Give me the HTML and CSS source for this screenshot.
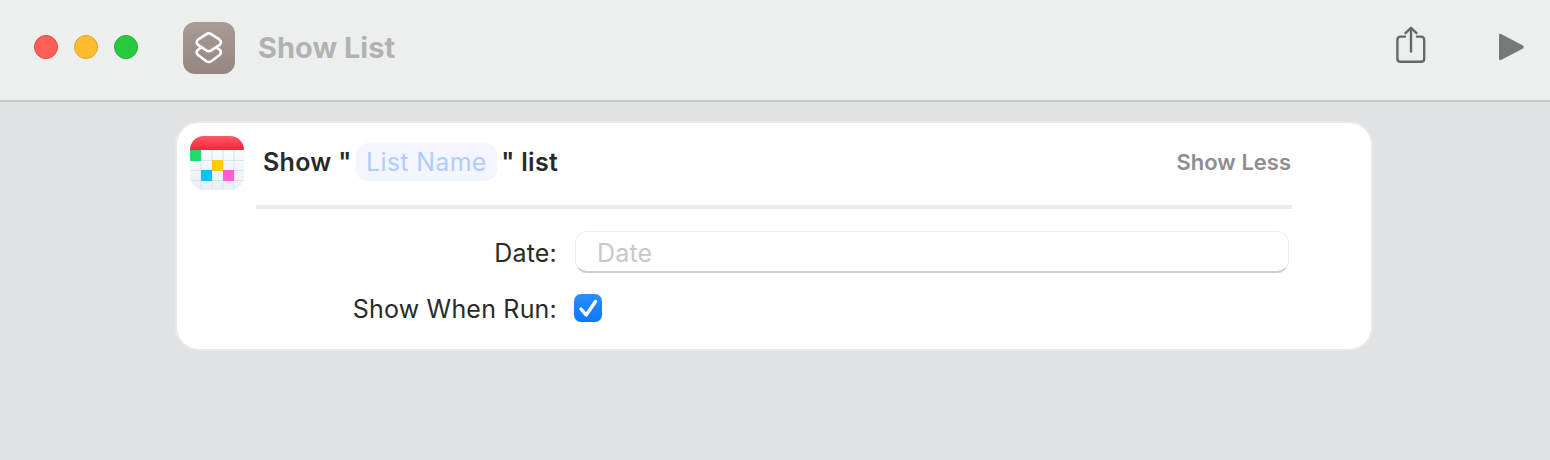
FILE: index.html
```html
<!DOCTYPE html>
<html lang="en">
<head>
    <meta charset="UTF-8">
    <meta name="viewport" content="width=device-width, initial-scale=1.0">
    <title>Show List</title>
    <link rel="stylesheet" href="styles.css">
</head>
<body>
    <header class="titlebar">
        <div class="traffic">
            <span class="light red"></span>
            <span class="light yellow"></span>
            <span class="light green"></span>
        </div>
        <div class="app-icon">
            <svg width="52" height="52" viewBox="0 0 52 52" fill="none" stroke="#fff" stroke-width="2.6" stroke-linejoin="round" stroke-linecap="round">
                <path d="M18.5 25.3 L15 27.8 Q12.2 30.4 15 33 L23 39 Q25.8 41 28.6 39 L36.600 33 Q39.400 30.400 36.600 27.800 L33 25.300"/>
                <path d="M23 12.4 Q25.8 10.4 28.6 12.4 L36.600 17.600 Q39.400 20.200 36.600 22.800 L28.600 28.200 Q25.800 30.200 23 28.200 L15 22.800 Q12.200 20.200 15 17.600 Z"/>
            </svg>
        </div>
        <h1 class="app-title">Show List</h1>
        <div class="actions">
            <svg class="share" width="30" height="38" viewBox="0 0 30 38" fill="none" stroke="#666867" stroke-width="2.4" stroke-linecap="round" stroke-linejoin="round">
                <path d="M9 10.6 H4.8 Q1.400 10.600 1.400 14 V32.400 Q1.400 35.800 4.800 35.800 H24.800 Q28.200 35.800 28.200 32.400 V14 Q28.200 10.600 24.800 10.600 H21"/>
                <path d="M15 25.500 V2.200"/>
                <path d="M9.500 7.200 L15 1.800 L20.500 7.200"/>
            </svg>
            <svg class="play" width="26" height="28" viewBox="0 0 26 28">
                <path d="M1 2.200 Q1 .2 3 1 L25 12.600 Q26.400 14 25 15.400 L3 27 Q1 27.800 1 25.800 Z" fill="#77787a"/>
            </svg>
        </div>
    </header>

    <main class="card">
        <div class="card-head">
            <svg class="cal-icon" width="54" height="54" viewBox="0 0 54 54">
                <defs>
                    <clipPath id="calClip"><rect width="54" height="54" rx="14"/></clipPath>
                    <linearGradient id="calRed" x1="0" y1="0" x2="0" y2="1">
                        <stop offset="0" stop-color="#ff5a66"/>
                        <stop offset="1" stop-color="#f8233a"/>
                    </linearGradient>
                    <linearGradient id="calBody" x1="0" y1="0" x2="0" y2="1">
                        <stop offset="0" stop-color="#ffffff"/>
                        <stop offset="1" stop-color="#e9eff6"/>
                    </linearGradient>
                </defs>
                <g clip-path="url(#calClip)">
                    <rect width="54" height="54" fill="url(#calBody)"/>
                    <g stroke="#d9e3ee" stroke-width="1">
                        <path d="M11 14V54M22 14V54M33 14V54M44 14V54M0 24.500H54M0 34.500H54M0 44.500H54"/>
                    </g>
                    <rect x="0" y="14" width="11" height="11" fill="#1fdc6a"/>
                    <rect x="22" y="24" width="11" height="11" fill="#ffcc0a"/>
                    <rect x="11" y="34" width="11" height="11" fill="#0cc0fa"/>
                    <rect x="33" y="34" width="11" height="11" fill="#ff5fd0"/>
                    <rect width="54" height="14" fill="url(#calRed)"/>
                </g>
            </svg>
            <div class="phrase">
                <span>Show "</span>
                <span class="pill">List Name</span>
                <span>" list</span>
            </div>
            <span class="show-less">Show Less</span>
        </div>
        <div class="divider"></div>
        <div class="form">
            <label class="form-label">Date:</label>
            <div class="date-input">Date</div>
            <label class="form-label">Show When Run:</label>
            <div class="checkbox">
                <svg width="28" height="28" viewBox="0 0 28 28" fill="none" stroke="#fff" stroke-width="3.4" stroke-linecap="round" stroke-linejoin="round">
                    <path d="M7 15 L12.200 21 L21.500 7.500"/>
                </svg>
            </div>
        </div>
    </main>
</body>
</html>
```

FILE: styles.css
```css
* {
    box-sizing: border-box;
}
body {
    margin: 0;
    height: 460px;
    overflow: hidden;
    font-family: Inter, "Liberation Sans", sans-serif;
    background-color: #e1e2e4;
    color: #2a2a2a;
}
.titlebar {
    display: flex;
    align-items: center;
    height: 102px;
    padding: 0 26px 6px 34px;
    background-color: #edefee;
    border-bottom: 2px solid #c8c9c9;
}
.traffic {
    display: flex;
    gap: 16px;
    margin-right: 45px;
}
.light {
    width: 24px;
    height: 24px;
    border-radius: 50%;
    border: 1px solid;
}
.red {
    background-color: #ff5f57;
    border-color: #e8443e;
}
.yellow {
    background-color: #ffbd2e;
    border-color: #e5a125;
}
.green {
    background-color: #28c93f;
    border-color: #1fb032;
}
.app-icon {
    width: 52px;
    height: 52px;
    margin-top: 2px;
    margin-right: 23px;
    border-radius: 12px;
    background: linear-gradient(#a89c96, #95867f);
}
.app-icon svg {
    display: block;
}
.app-title {
    margin: 0;
    font-size: 29px;
    font-weight: 700;
    color: #b1b3b2;
}
.actions {
    display: flex;
    align-items: center;
    gap: 72px;
    margin-left: auto;
}
.share {
    margin-top: -4px;
}
.card {
    width: 1198px;
    height: 230px;
    margin: 19px 0 0 175px;
    padding: 13px 0 0 13px;
    background-color: #fff;
    border: 2px solid #e9e9e9;
    border-radius: 24px;
}
.card-head {
    display: flex;
    align-items: center;
    height: 54px;
    padding-right: 80px;
}
.cal-icon {
    margin-right: 19px;
}
.phrase {
    display: flex;
    align-items: center;
    gap: 4.5px;
    margin-top: -2px;
    font-size: 25px;
    font-weight: 600;
    letter-spacing: .3px;
}
.pill {
    padding: 4px 10px;
    line-height: 30px;
    border-radius: 12px;
    background-color: #f3f6ff;
    color: #b0ccff;
    font-weight: 400;
    letter-spacing: .3px;
}
.show-less {
    margin-top: -2px;
    margin-left: auto;
    font-size: 22px;
    font-weight: 600;
    color: #8e8e8e;
}
.divider {
    width: 1036px;
    height: 4px;
    margin: 15px 0 0 66px;
    background-color: #ebebeb;
}
.form {
    display: grid;
    grid-template-columns: 368px 714px;
    grid-template-rows: 42px 28px;
    row-gap: 21px;
    column-gap: 17px;
    align-items: center;
    margin-top: 22px;
}
.form-label {
    margin-top: 2px;
    padding-right: 1px;
    font-size: 25px;
    letter-spacing: .2px;
    text-align: right;
}
.date-input {
    height: 42px;
    padding-left: 21px;
    line-height: 42px;
    font-size: 25px;
    letter-spacing: .2px;
    color: #c8c8c8;
    background-color: #fff;
    border: 1px solid #ececec;
    border-bottom: 2px solid #cfcfcf;
    border-radius: 12px;
}
.checkbox {
    width: 28px;
    height: 28px;
    margin-left: -1px;
    border-radius: 7px;
    background: linear-gradient(#2c8dff, #0a78ff);
}
.checkbox svg {
    display: block;
}
```
